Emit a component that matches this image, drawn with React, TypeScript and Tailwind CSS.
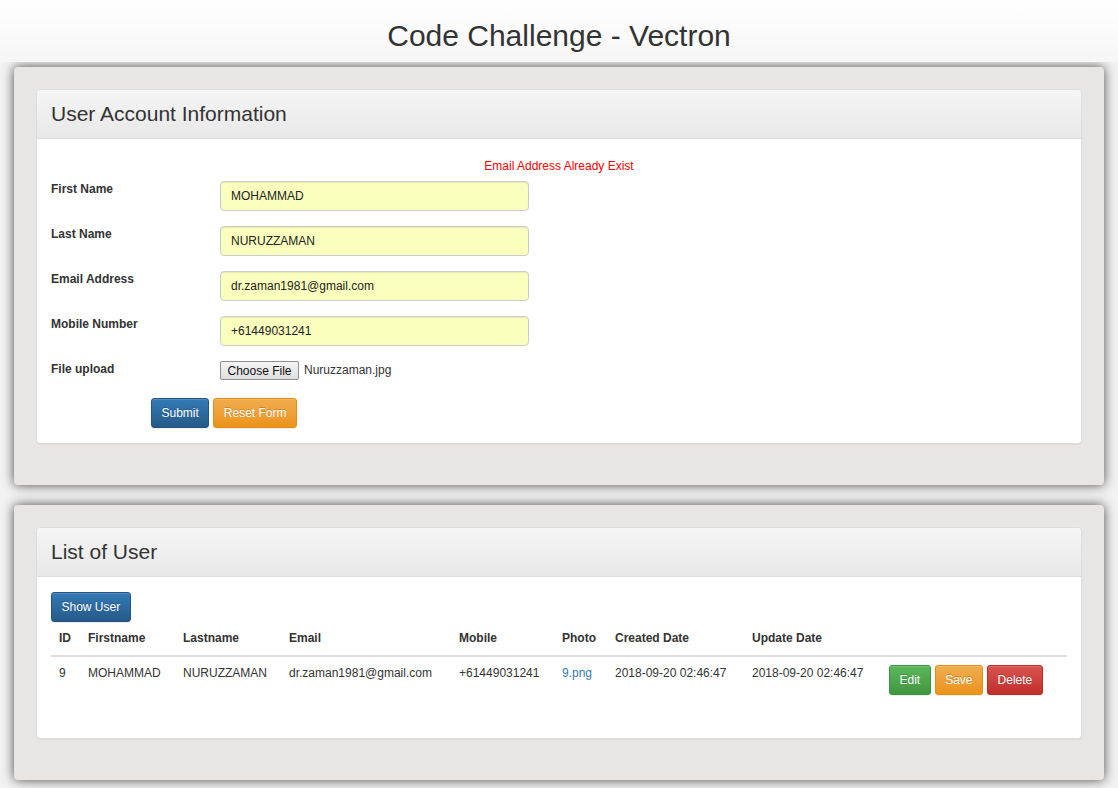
import React from "react";

type User = {
  id: number;
  firstname: string;
  lastname: string;
  email: string;
  mobile: string;
  photo: string;
  created: string;
  updated: string;
};

const users: User[] = [
  {
    id: 9,
    firstname: "MOHAMMAD",
    lastname: "NURUZZAMAN",
    email: "dr.zaman1981@gmail.com",
    mobile: "+61449031241",
    photo: "9.png",
    created: "2018-09-20 02:46:47",
    updated: "2018-09-20 02:46:47",
  },
];

const fields = [
  { label: "First Name", value: "MOHAMMAD" },
  { label: "Last Name", value: "NURUZZAMAN" },
  { label: "Email Address", value: "dr.zaman1981@gmail.com" },
  { label: "Mobile Number", value: "+61449031241" },
];

const btnBase =
  "h-[30px] px-[9.5px] rounded-[3px] border text-[12px] text-white leading-none [text-shadow:0_-1px_0_rgba(0,0,0,0.2)] shadow-[inset_0_1px_0_rgba(255,255,255,0.15),0_1px_1px_rgba(0,0,0,0.075)]";

function Well({ title, children }: { title: string; children: React.ReactNode }) {
  return (
    <div className="bg-[#e7e6e4] rounded-[4px] pt-[22px] px-[22px] pb-[41px] shadow-[0_0_12px_rgba(0,0,0,0.7)]">
      <div className="bg-white rounded-[4px] border border-[#ddd] shadow-[0_1px_1px_rgba(0,0,0,0.05)]">
        {/* panel heading */}
        <div className="h-[49px] flex items-center pl-[14px] border-b border-[#ddd] rounded-t-[4px] bg-gradient-to-b from-[#f5f5f5] to-[#e8e8e8]">
          <h3 className="text-[21px] text-[#333] leading-none -mt-[2px]">{title}</h3>
        </div>
        <div className="py-[15px] px-[14px]">{children}</div>
      </div>
    </div>
  );
}

export default function App() {
  return (
    <div className="min-h-[788px] bg-[#f2f2f2] pb-[8px] font-['Liberation_Sans',Arial,sans-serif] text-[#333]">
      {/* Header */}
      <header className="relative z-10 h-[62px] flex items-center justify-center pt-[10px] bg-gradient-to-b from-white to-[#f6f6f6]">
        <h1 className="text-[30px] text-[#333] leading-none">Code Challenge - Vectron</h1>
      </header>

      <main className="px-[14px] pt-[5px] flex flex-col gap-[20px]">
        <Well title="User Account Information">
          <div className="text-center text-[12px] text-[#ff0000] leading-[24px] mb-[3px]">
            Email Address Already Exist
          </div>

          {fields.map((f) => (
            <div key={f.label} className="flex mb-[15px]">
              <label className="w-[169px] text-[12px] font-bold leading-[17px]">{f.label}</label>
              <div className="w-[309px] h-[30px] flex items-center pl-[10px] rounded-[4px] border border-[#ccc] bg-[#faffbd] text-[12px] text-[#222] shadow-[inset_0_1px_1px_rgba(0,0,0,0.075)]">
                {f.value}
              </div>
            </div>
          ))}

          <div className="flex mb-[15px] h-[22px]">
            <label className="w-[169px] text-[12px] font-bold leading-[17px]">File upload</label>
            <div className="flex items-start">
              <button className="h-[19px] w-[79px] rounded-[2px] border border-[#8f8f8f] bg-gradient-to-b from-[#f6f6f6] to-[#dedede] text-[12px] text-[#111] leading-none">
                Choose File
              </button>
              <span className="ml-[5px] text-[12px] leading-[19px]">Nuruzzaman.jpg</span>
            </div>
          </div>

          <div className="flex gap-[4px] ml-[100px]">
            <button className={`${btnBase} border-[#245580] bg-gradient-to-b from-[#337ab7] to-[#265a88]`}>Submit</button>
            <button className={`${btnBase} border-[#e38d13] bg-gradient-to-b from-[#f0ad4e] to-[#eb9316]`}>Reset Form</button>
          </div>
        </Well>

        <Well title="List of User">
          <button className={`${btnBase} border-[#245580] bg-gradient-to-b from-[#337ab7] to-[#265a88]`}>Show User</button>

          <table className="w-full table-fixed mb-[20px] text-[12px] text-left">
            <colgroup>
              <col className="w-[29px]" />
              <col className="w-[95px]" />
              <col className="w-[106px]" />
              <col className="w-[170px]" />
              <col className="w-[103px]" />
              <col className="w-[53px]" />
              <col className="w-[137px]" />
              <col className="w-[137px]" />
              <col />
            </colgroup>
            <thead>
              <tr className="border-b-2 border-[#ddd]">
                {["ID", "Firstname", "Lastname", "Email", "Mobile", "Photo", "Created Date", "Update Date", ""].map((h, i) => (
                  <th key={i} className="p-[8px] font-bold leading-[17px] align-bottom">
                    {h}
                  </th>
                ))}
              </tr>
            </thead>
            <tbody>
              {users.map((u) => (
                <tr key={u.id}>
                  <td className="p-[8px] leading-[17px] align-top">{u.id}</td>
                  <td className="p-[8px] leading-[17px] align-top">{u.firstname}</td>
                  <td className="p-[8px] leading-[17px] align-top">{u.lastname}</td>
                  <td className="p-[8px] leading-[17px] align-top">{u.email}</td>
                  <td className="p-[8px] leading-[17px] align-top">{u.mobile}</td>
                  <td className="p-[8px] leading-[17px] align-top">
                    <a className="text-[#337ab7]">{u.photo}</a>
                  </td>
                  <td className="p-[8px] leading-[17px] align-top">{u.created}</td>
                  <td className="p-[8px] leading-[17px] align-top">{u.updated}</td>
                  <td className="p-[8px] align-top">
                    <div className="flex gap-[4px]">
                      <button className={`${btnBase} border-[#3e8f3e] bg-gradient-to-b from-[#5cb85c] to-[#419641]`}>Edit</button>
                      <button className={`${btnBase} border-[#e38d13] bg-gradient-to-b from-[#f0ad4e] to-[#eb9316]`}>Save</button>
                      <button className={`${btnBase} border-[#b92c28] bg-gradient-to-b from-[#d9534f] to-[#c12e2a]`}>Delete</button>
                    </div>
                  </td>
                </tr>
              ))}
            </tbody>
          </table>
        </Well>
      </main>
    </div>
  );
}
